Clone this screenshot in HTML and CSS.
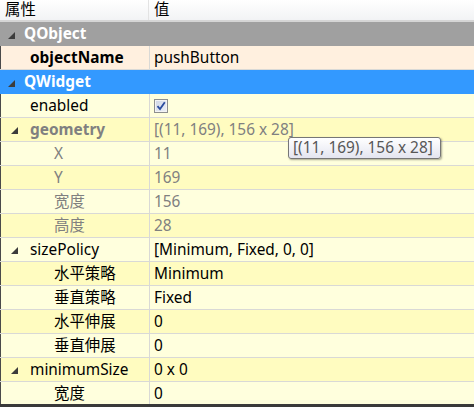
FILE: index.html
```html
<!DOCTYPE html>
<html>
<head>
<meta charset="utf-8">
<link rel="stylesheet" href="styles.css">
</head>
<body>
<div class="editor">
  <div class="header">
    <div class="hname">属性</div>
    <div class="hvalue">值</div>
  </div>

  <div class="group gray">
    <svg class="arrow" width="7" height="7" viewBox="0 0 7 7"><polygon points="7,0 7,7 0,7"/></svg>
    <span class="gname">QObject</span>
  </div>
  <div class="row peach">
    <div class="name l1 bold">objectName</div>
    <div class="value">pushButton</div>
  </div>

  <div class="group blue">
    <svg class="arrow" width="7" height="7" viewBox="0 0 7 7"><polygon points="7,0 7,7 0,7"/></svg>
    <span class="gname">QWidget</span>
  </div>
  <div class="row light">
    <div class="name l1">enabled</div>
    <div class="value"><span class="check"><svg width="10" height="10" viewBox="0 0 10 10"><path d="M1.5 5.2 L4 8 L8.8 1.2" fill="none" stroke="#2b4c9e" stroke-width="1.8"/></svg></span></div>
  </div>
  <div class="row dark muted">
    <div class="name l1 bold"><svg class="parrow" width="7" height="7" viewBox="0 0 7 7"><polygon points="7,0 7,7 0,7"/></svg>geometry</div>
    <div class="value">[(11, 169), 156 x 28]</div>
  </div>
  <div class="row light muted">
    <div class="name l2">X</div>
    <div class="value">11</div>
  </div>
  <div class="row dark muted">
    <div class="name l2">Y</div>
    <div class="value">169</div>
  </div>
  <div class="row light muted">
    <div class="name l2">宽度</div>
    <div class="value">156</div>
  </div>
  <div class="row dark muted">
    <div class="name l2">高度</div>
    <div class="value">28</div>
  </div>
  <div class="row light">
    <div class="name l1"><svg class="parrow" width="7" height="7" viewBox="0 0 7 7"><polygon points="7,0 7,7 0,7"/></svg>sizePolicy</div>
    <div class="value">[Minimum, Fixed, 0, 0]</div>
  </div>
  <div class="row dark">
    <div class="name l2">水平策略</div>
    <div class="value">Minimum</div>
  </div>
  <div class="row light">
    <div class="name l2">垂直策略</div>
    <div class="value">Fixed</div>
  </div>
  <div class="row dark">
    <div class="name l2">水平伸展</div>
    <div class="value">0</div>
  </div>
  <div class="row light">
    <div class="name l2">垂直伸展</div>
    <div class="value">0</div>
  </div>
  <div class="row dark">
    <div class="name l1"><svg class="parrow" width="7" height="7" viewBox="0 0 7 7"><polygon points="7,0 7,7 0,7"/></svg>minimumSize</div>
    <div class="value">0 x 0</div>
  </div>
  <div class="row light">
    <div class="name l2">宽度</div>
    <div class="value">0</div>
  </div>

  <div class="tooltip">[(11, 169), 156 x 28]</div>
</div>
</body>
</html>
```

FILE: styles.css
```css
html, body {
  margin: 0;
  padding: 0;
}
body {
  background: #3a3a3a;
  width: 474px;
  height: 407px;
  overflow: hidden;
  font-family: "Noto Sans", "Noto Sans CJK SC", sans-serif;
  font-size: 15.4px;
  color: #000;
}
.editor {
  position: relative;
  height: 404px;
  overflow: hidden;
  background: #ffffdd;
}
.header {
  display: flex;
  height: 20px;
  border-bottom: 2px solid #d5d5d5;
  background: linear-gradient(#ffffff, #f2f3f5);
  line-height: 20px;
}
.hname {
  width: 149px;
  padding-left: 5px;
  box-sizing: border-box;
  border-right: 1px solid #e3e3e3;
}
.hvalue {
  padding-left: 5px;
}
.group {
  display: flex;
  align-items: center;
  height: 24px;
  color: #fff;
  font-weight: bold;
}
.group.gray { background: #a0a0a0; }
.group.blue { background: #3399ff; }
.arrow {
  fill: #3c3c3c;
  margin-left: 8px;
  margin-top: 2px;
  margin-right: 9px;
}
.gname {
  line-height: 24px;
}
.row {
  display: flex;
  height: 23px;
  line-height: 23px;
  border-bottom: 1px solid #d9d9d6;
  box-shadow: inset 1px 0 0 #4a4a4a;
}
.row.peach { background: #fff0df; }
.row.light { background: #ffffdd; }
.row.dark { background: #fffcc0; }
.name {
  width: 150px;
  flex: none;
  box-sizing: border-box;
  border-right: 1px solid #d9d9d6;
  display: flex;
  align-items: center;
  white-space: nowrap;
}
.name.l1 { padding-left: 30px; }
.name.l2 { padding-left: 54px; }
.name.bold { font-weight: bold; }
.parrow {
  fill: #3c3c3c;
  margin-left: -19px;
  margin-right: 12px;
  margin-top: 2px;
}
.value {
  padding-left: 4px;
  display: flex;
  align-items: center;
  white-space: nowrap;
}
.muted .name, .muted .value {
  color: #808080;
}
.check {
  box-sizing: border-box;
  width: 14px;
  height: 14px;
  border: 1px solid #8e8f8f;
  box-shadow: inset 0 0 0 1px #f4f4f4;
  background: linear-gradient(135deg, #cfd6e5, #eef1f7);
  display: flex;
  align-items: center;
  justify-content: center;
}
.tooltip {
  position: absolute;
  left: 288px;
  top: 137px;
  width: 153px;
  height: 22px;
  box-sizing: border-box;
  border: 1px solid #767676;
  border-radius: 3px;
  background: linear-gradient(#ffffff, #e4e5f0);
  box-shadow: 1px 1px 2px rgba(0, 0, 0, 0.35);
  color: #575757;
  padding-left: 4px;
  line-height: 20px;
  white-space: nowrap;
}
```
